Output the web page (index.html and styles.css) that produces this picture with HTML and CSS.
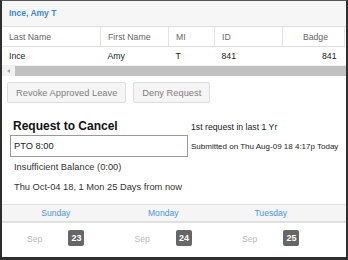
FILE: index.html
```html
<!DOCTYPE html>
<html>
<head>
    <title>Leave Request</title>
    <link rel="stylesheet" href="styles.css">
</head>
<body>
    <div class="panel">
        <div class="emp-head">Ince, Amy T</div>

        <div class="grid-wrap">
            <table class="emp-table">
                <tr>
                    <th class="c-last">Last Name</th>
                    <th class="c-first">First Name</th>
                    <th class="c-mi">MI</th>
                    <th class="c-id">ID</th>
                    <th class="c-badge num">Badge</th>
                </tr>
                <tr>
                    <td>Ince</td>
                    <td>Amy</td>
                    <td>T</td>
                    <td>841</td>
                    <td class="num">841</td>
                </tr>
            </table>
        </div>
        <div class="hscroll">
            <span class="arrow"></span>
            <div class="thumb"></div>
        </div>

        <div class="actions">
            <button class="btn">Revoke Approved Leave</button>
            <button class="btn">Deny Request</button>
        </div>

        <div class="cancel">
            <h2 class="cancel-title">Request to Cancel</h2>
            <div class="count">1st request in last 1 Yr</div>
            <input class="leave-input" type="text" value="PTO 8:00">
            <div class="submitted">Submitted on Thu Aug-09 18 4:17p Today</div>
        </div>

        <p class="note">Insufficient Balance (0:00)</p>
        <p class="note">Thu Oct-04 18, 1 Mon 25 Days from now</p>

        <!-- week strip -->
        <div class="week">
            <div class="days">
                <div class="day">Sunday</div>
                <div class="day">Monday</div>
                <div class="day">Tuesday</div>
            </div>
            <div class="dates">
                <div class="date"><span class="mon">Sep</span><span class="badge">23</span></div>
                <div class="date"><span class="mon">Sep</span><span class="badge">24</span></div>
                <div class="date"><span class="mon">Sep</span><span class="badge">25</span></div>
            </div>
        </div>
    </div>
</body>
</html>
```

FILE: styles.css
```css
body {
    margin: 0;
    font-family: "Liberation Sans", Arial, sans-serif;
    background-color: #fff;
}

.panel {
    width: 348px;
    height: 260px;
    box-sizing: border-box;
    border: 2px solid #2e2e2e;
    border-top: 1px solid #555;
    border-bottom-width: 3px;
    overflow: hidden;
    background-color: #fff;
}

.emp-head {
    height: 25px;
    line-height: 25px;
    padding-left: 7px;
    background-color: #f6f6f6;
    border-bottom: 1px solid #ddd;
    color: #3a88d5;
    font-size: 8.5px;
    font-weight: bold;
}

/* Employee grid */
.grid-wrap {
    overflow: hidden;
}

.emp-table {
    border-collapse: collapse;
    table-layout: fixed;
    width: 342px;
    font-size: 8.7px;
}

.emp-table th {
    height: 19px;
    padding: 0 0 0 7px;
    text-align: left;
    font-weight: normal;
    color: #666;
    border-right: 1px solid #e4e4e4;
    border-bottom: 1px solid #ddd;
}

.emp-table td {
    height: 18px;
    padding: 0 0 0 7px;
    color: #222;
}

.emp-table th.num {
    text-align: right;
    padding-right: 16px;
}

.emp-table td.num {
    text-align: right;
    padding-right: 8px;
}

.c-last { width: 91px; }
.c-first { width: 60px; }
.c-mi { width: 38px; }
.c-id { width: 60px; }
.c-badge { width: 38px; }

.hscroll {
    display: flex;
    align-items: center;
    height: 11px;
    background-color: #f1f1f1;
}

.hscroll .arrow {
    width: 0;
    height: 0;
    margin: 0 5px 0 5px;
    border-top: 2.5px solid transparent;
    border-bottom: 2.5px solid transparent;
    border-right: 3px solid #a3a3a3;
}

.hscroll .thumb {
    flex: 1;
    height: 10px;
    background-color: #c1c1c1;
}

/* Buttons */
.actions {
    display: flex;
    gap: 7px;
    margin-top: 6px;
    padding-left: 5px;
}

.btn {
    height: 21px;
    padding: 0 8px;
    border: 1px solid #ddd;
    border-radius: 2px;
    background-color: #f5f5f5;
    color: #808080;
    font-family: "Liberation Sans", Arial, sans-serif;
    font-size: 9.3px;
}

/* Cancel block */
.cancel {
    display: grid;
    grid-template-columns: 178px 1fr;
    column-gap: 3px;
    margin-top: 16px;
    padding-left: 8px;
}

.cancel-title {
    margin: 0;
    padding-left: 3px;
    font-size: 12px;
    line-height: 14px;
    color: #111;
    align-self: end;
}

.count {
    font-size: 8.7px;
    color: #222;
    align-self: end;
    padding-bottom: 1px;
}

.leave-input {
    box-sizing: border-box;
    width: 178px;
    height: 22px;
    margin-top: 2px;
    padding: 0 3px;
    border: 1px solid #9a9a9a;
    font-family: "Liberation Sans", Arial, sans-serif;
    font-size: 9.3px;
    color: #222;
}

.submitted {
    align-self: center;
    font-size: 8px;
    color: #222;
    padding-top: 2px;
}

.note {
    margin: 0;
    padding-left: 12px;
    font-size: 9.3px;
    line-height: 20px;
    color: #333;
}

/* Week strip */
.week {
    margin-top: 7px;
}

.days {
    display: flex;
    height: 16px;
    background-color: #f5f5f5;
    border-top: 1px solid #e0e0e0;
    border-bottom: 2px solid #e0e0e0;
}

.day {
    flex: 0 0 107.5px;
    text-align: center;
    line-height: 16px;
    font-size: 8.6px;
    color: #4996da;
}

.dates {
    display: flex;
    padding-top: 7px;
}

.date {
    flex: 0 0 107.5px;
    display: flex;
    justify-content: center;
    align-items: center;
    gap: 26px;
}

.mon {
    font-size: 8.6px;
    color: #bbb;
    padding-top: 2px;
}

.badge {
    width: 16px;
    height: 16px;
    line-height: 16px;
    text-align: center;
    border-radius: 2px;
    background-color: #666;
    color: #fff;
    font-size: 9px;
    font-weight: bold;
}
```
